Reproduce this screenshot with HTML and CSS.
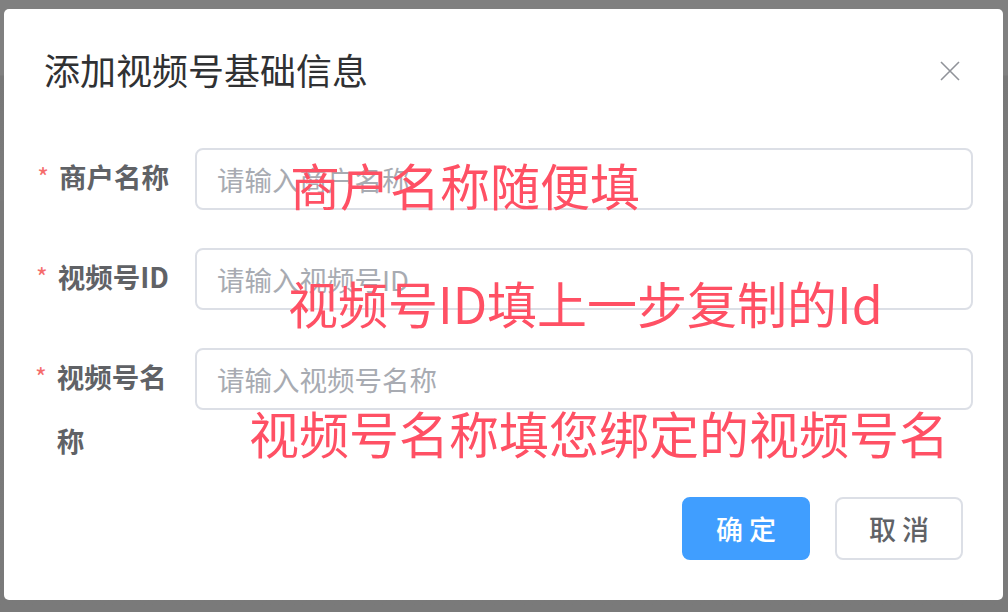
FILE: index.html
```html
<!DOCTYPE html>
<html lang="zh-CN">
<head>
  <meta charset="UTF-8">
  <meta name="viewport" content="width=device-width, initial-scale=1.0">
  <title>添加视频号基础信息</title>
  <link rel="stylesheet" href="styles.css">
</head>
<body>
  <div class="overlay">
    <div class="dialog">
      <div class="dialog-header">
        <span class="dialog-title">添加视频号基础信息</span>
        <button type="button" class="dialog-close" aria-label="关闭">
          <svg width="20" height="20" viewBox="0 0 20 20">
            <path d="M1 1 L19 19 M19 1 L1 19" stroke="#909399" stroke-width="1.6" fill="none"/>
          </svg>
        </button>
      </div>

      <form class="dialog-form">
        <div class="form-item">
          <label class="form-label" for="shop"><span class="required">*</span><span class="label-text">商户名称</span></label>
          <input class="form-input" type="text" id="shop" placeholder="请输入商户名称">
        </div>
        <div class="form-item">
          <label class="form-label" for="finder-id"><span class="required">*</span><span class="label-text">视频号ID</span></label>
          <input class="form-input" type="text" id="finder-id" placeholder="请输入视频号ID">
        </div>
        <div class="form-item">
          <label class="form-label" for="finder-name"><span class="required">*</span><span class="label-text">视频号名称</span></label>
          <input class="form-input" type="text" id="finder-name" placeholder="请输入视频号名称">
        </div>
      </form>

      <div class="dialog-footer">
        <button type="button" class="btn btn-primary">确 定</button>
        <button type="button" class="btn">取 消</button>
      </div>

      <!-- Hinweise, über das Formular gelegt -->
      <div class="note note-shop">商户名称随便填</div>
      <div class="note note-id">视频号ID填上一步复制的Id</div>
      <div class="note note-name">视频号名称填您绑定的视频号名</div>
    </div>
  </div>
</body>
</html>
```

FILE: styles.css
```css
/* Reset */
* {
  box-sizing: border-box;
  margin: 0;
  padding: 0;
}

body {
  font-family: "Noto Sans CJK SC", "Noto Sans", sans-serif;
  color: #303133;
  background: #7a7a7a;
}

/* Overlay */
.overlay {
  height: 612px;
  padding: 9px 5px 0 4px;
  background:
    linear-gradient(#808080 0, #808080 75px, #787878 76px, #7b7b7b 200px, #797979 201px, #7a7a7a 100%);
}

/* Dialog */
.dialog {
  position: relative;
  width: 999px;
  height: 591px;
  background: #fff;
  border-radius: 5px;
}

.dialog-header {
  display: flex;
  justify-content: space-between;
  align-items: center;
  padding: 35px 43px 0 40px;
}
.dialog-title {
  font-size: 36px;
  line-height: 50px;
  color: #303133;
}
.dialog-close {
  display: flex;
  width: 20px;
  height: 20px;
  margin-top: 3px;
  border: none;
  background: none;
  cursor: pointer;
}

/* Formular */
.dialog-form {
  margin-top: 53px;
  padding: 0 30px 0 31px;
}
.form-item {
  display: flex;
  align-items: flex-start;
  margin-bottom: 36px;
}
.form-item:last-child {
  margin-bottom: 0;
}
.form-label {
  display: flex;
  justify-content: flex-end;
  flex: 0 0 160px;
  margin: -3px 0 3px;
  padding-right: 26px;
  font-size: 27.5px;
  font-weight: bold;
  line-height: 64px;
  color: #606266;
}
.required {
  color: #f56c6c;
  font-size: 25px;
  font-weight: normal;
  margin-right: 10px;
}
.label-text {
  max-width: 114px;
}
.form-input {
  flex: 1;
  height: 62px;
  margin-top: 1px;
  padding: 0 20px;
  border: 2px solid #dcdfe6;
  border-radius: 8px;
  font-family: inherit;
  font-size: 27.5px;
  color: #606266;
  outline: none;
}
.form-input::placeholder {
  color: #a8abb2;
}

/* Buttons */
.dialog-footer {
  display: flex;
  justify-content: flex-end;
  gap: 25px;
  padding: 22px 40px 0 0;
}
.btn {
  width: 128px;
  height: 63px;
  border: 2px solid #dcdfe6;
  border-radius: 8px;
  background: #fff;
  font-family: inherit;
  font-size: 27px;
  font-weight: 500;
  color: #606266;
  cursor: pointer;
}
.btn-primary {
  background: #409eff;
  border-color: #409eff;
  color: #fff;
}

/* Hinweise */
.note {
  position: absolute;
  font-size: 50px;
  line-height: 50px;
  color: #ff5064;
  white-space: nowrap;
  pointer-events: none;
}
.note-shop {
  left: 286px;
  top: 150px;
}
.note-id {
  left: 284px;
  top: 268px;
}
.note-name {
  left: 245px;
  top: 398px;
}
```
